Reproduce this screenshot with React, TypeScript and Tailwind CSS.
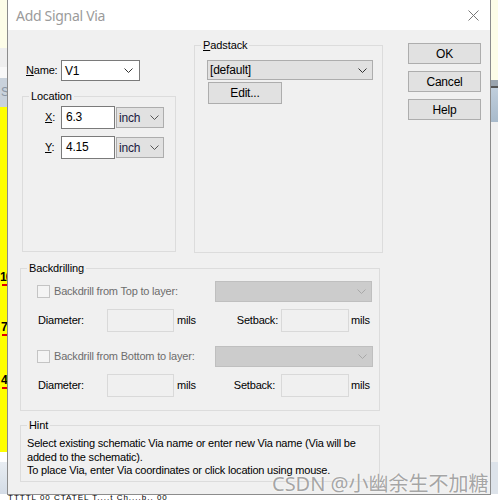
import React from "react";

function Chevron({ color = "#333" }: { color?: string }) {
  return (
    <svg width="9" height="5" viewBox="0 0 9 5">
      <polyline points="0.5,0.5 4.5,4.5 8.5,0.5" fill="none" stroke={color} strokeWidth="1" />
    </svg>
  );
}

function Legend({ children }: { children: React.ReactNode }) {
  return <legend className="ml-[6px] px-[2px] leading-[14px] text-[11px] tracking-[-0.1px]">{children}</legend>;
}

function DisabledCheck({ label }: { label: string }) {
  return (
    <div className="flex items-center">
      <div className="w-[13px] h-[13px] border border-[#c4c4c4] bg-[#f4f4f4]" />
      <span className="ml-[4px] text-[#6d6d6d]">{label}</span>
    </div>
  );
}

export default function App() {
  return (
    <div className="relative w-[498px] h-[502px] overflow-hidden bg-[#f0f0f0] font-['Liberation_Sans',Arial,sans-serif] text-[11px] tracking-[-0.2px] text-[#000]">
      {/* background desktop */}
      <div className="flex flex-col w-full h-full">
        <div className="flex flex-1">
          <div className="w-[7px] flex flex-col">
            <div className="h-[48px] bg-[#fdfde8]" />
            <div className="h-[19px] bg-[#eeeeee]" />
            <div className="h-[11px] bg-[#f8f8f8]" />
            <div className="h-[29px] bg-[#c9d2dc] text-[#8a96a4] text-[12px] leading-[29px] pl-[1px]">S</div>
            <div className="flex-1 bg-[#ffff00] flex flex-col">
              <div className="h-[163px]" />
              <div className="text-[12px] font-bold leading-[14px] tracking-[-1px] whitespace-nowrap">10</div>
              <div className="h-[2px] bg-[#e00000] ml-[2px] w-[5px]" />
              <div className="h-[34px]" />
              <div className="text-[12px] font-bold leading-[14px] pl-[1px] whitespace-nowrap">7</div>
              <div className="h-[2px] bg-[#e00000] ml-[2px] w-[5px]" />
              <div className="h-[37px]" />
              <div className="text-[12px] font-bold leading-[14px] pl-[1px] whitespace-nowrap">4</div>
              <div className="h-[2px] bg-[#e00000] ml-[2px] w-[5px]" />
            </div>
            <div className="h-[10px] bg-[#ffffff]" />
            <div className="h-[32px] bg-gradient-to-b from-[#e8edf2] to-[#d4dce6]" />
          </div>
          <div className="flex-1" />
          <div className="w-[7px] flex flex-col">
            <div className="h-[80px] bg-[#fdfde8]" />
            <div className="h-[6px] bg-[#9aa4ae]" />
            <div className="h-[2px] bg-[#555]" />
            <div className="h-[34px] bg-gradient-to-b from-[#c0cedc] to-[#a8bacb]" />
            <div className="flex-1 bg-[#f0f0f0]" />
            <div className="h-[32px] bg-[#dde3ea]" />
          </div>
        </div>
        <div className="h-[8px] bg-[#ffffff]">
          <div className="pl-[8px] text-[8px] leading-[8px] tracking-[1px]">TTTTL 00 CTATEL T....t Ch....b.. 00</div>
        </div>
      </div>

      {/* dialog window */}
      <div className="absolute left-[7px] top-0 w-[484px] h-[495px] border-x border-b border-[#8c8c8c] bg-[#f0f0f0] flex flex-col">
        <div className="h-[30px] bg-white flex items-center justify-between pl-[8px] pr-[11px]">
          <span className="font-['Noto_Sans',sans-serif] text-[14px] tracking-[-0.3px] text-[#9b9b9b]">Add Signal Via</span>
          <svg width="11" height="11" viewBox="0 0 11 11">
            <path d="M0.5 0.5 L10.5 10.5 M10.5 0.5 L0.5 10.5" stroke="#777" strokeWidth="1" />
          </svg>
        </div>

        <div className="flex items-start">
          {/* left column */}
          <div className="ml-[14px] w-[154px] flex flex-col">
            <div className="mt-[30px] h-[21px] flex items-center">
              <span className="ml-[4px] w-[35px]"><u>N</u>ame:</span>
              <div className="w-[79px] h-[21px] bg-white border border-[#7a7a7a] flex items-center justify-between pl-[3px] pr-[6px]">
                <span className="text-[12px]">V1</span>
                <Chevron />
              </div>
            </div>
            <fieldset className="mt-[8px] h-[163px] border border-[#dcdcdc]">
              <Legend>Location</Legend>
              <div className="mt-[3px] flex items-center pl-[22px]">
                <span className="w-[16px]"><u>X</u>:</span>
                <div className="w-[54px] h-[23px] bg-white border border-[#7a7a7a] pl-[4px] leading-[20px] text-[12px]">6.3</div>
                <div className="ml-[1px] w-[48px] h-[21px] bg-[#e1e1e1] border border-[#adadad] flex items-center justify-between pl-[2px] pr-[4px]">
                  <span className="text-[12px] text-[#1a1a40]">inch</span>
                  <Chevron color="#555" />
                </div>
              </div>
              <div className="mt-[7px] flex items-center pl-[22px]">
                <span className="w-[16px]"><u>Y</u>:</span>
                <div className="w-[54px] h-[23px] bg-white border border-[#7a7a7a] pl-[4px] leading-[20px] text-[12px]">4.15</div>
                <div className="ml-[1px] w-[48px] h-[21px] bg-[#e1e1e1] border border-[#adadad] flex items-center justify-between pl-[2px] pr-[4px]">
                  <span className="text-[12px] text-[#1a1a40]">inch</span>
                  <Chevron color="#555" />
                </div>
              </div>
            </fieldset>
          </div>

          {/* padstack */}
          <fieldset className="ml-[18px] mt-[8px] w-[189px] h-[215px] border border-[#dcdcdc]">
            <Legend><u>P</u>adstack</Legend>
            <div className="mt-[8px] ml-[12px] w-[166px] h-[20px] bg-[#e1e1e1] border border-[#adadad] flex items-center justify-between pl-[2px] pr-[5px]">
              <span className="text-[12px]">[default]</span>
              <Chevron />
            </div>
            <div className="mt-[2px] ml-[13px] w-[74px] h-[22px] bg-[#e1e1e1] border border-[#adadad] flex items-center justify-center text-[12px]">
              Edit...
            </div>
          </fieldset>

          {/* buttons */}
          <div className="ml-[25px] mt-[13px] flex flex-col gap-[7px]">
            <div className="w-[73px] h-[21px] bg-[#e1e1e1] border border-[#adadad] flex items-center justify-center text-[12px]">OK</div>
            <div className="w-[73px] h-[21px] bg-[#e1e1e1] border border-[#adadad] flex items-center justify-center text-[12px]">Cancel</div>
            <div className="w-[73px] h-[21px] bg-[#e1e1e1] border border-[#adadad] flex items-center justify-center text-[12px]">Help</div>
          </div>
        </div>

        {/* backdrilling */}
        <fieldset className="ml-[12px] mt-[8px] w-[360px] h-[150px] border border-[#dcdcdc]">
          <Legend>Backdrilling</Legend>
          <div className="mt-[6px] h-[21px] flex items-center">
            <div className="ml-[16px] w-[178px]">
              <DisabledCheck label="Backdrill from Top to layer:" />
            </div>
            <div className="w-[157px] h-[21px] bg-[#cccccc] border border-[#bfbfbf] flex items-center justify-end pr-[5px]">
              <Chevron color="#a8a8a8" />
            </div>
          </div>
          <div className="mt-[7px] h-[23px] flex items-center">
            <span className="ml-[17px] w-[69px]">Diameter:</span>
            <div className="w-[67px] h-[23px] border border-[#d9d9d9] bg-[#f0f0f0]" />
            <div className="ml-[3px] w-[101px] flex justify-between">
              <span>mils</span>
              <span>Setback:</span>
            </div>
            <div className="ml-[3px] w-[68px] h-[23px] border border-[#d9d9d9] bg-[#f0f0f0]" />
            <span className="ml-[2px]">mils</span>
          </div>
          <div className="mt-[14px] h-[21px] flex items-center">
            <div className="ml-[16px] w-[178px]">
              <DisabledCheck label="Backdrill from Bottom to layer:" />
            </div>
            <div className="w-[158px] h-[21px] bg-[#cccccc] border border-[#bfbfbf] flex items-center justify-end pr-[5px]">
              <Chevron color="#a8a8a8" />
            </div>
          </div>
          <div className="mt-[7px] h-[23px] flex items-center">
            <span className="ml-[17px] w-[69px]">Diameter:</span>
            <div className="w-[67px] h-[23px] border border-[#d9d9d9] bg-[#f0f0f0]" />
            <div className="ml-[3px] w-[98px] flex justify-between">
              <span>mils</span>
              <span>Setback:</span>
            </div>
            <div className="ml-[6px] w-[68px] h-[23px] border border-[#d9d9d9] bg-[#f0f0f0]" />
            <span className="ml-[2px]">mils</span>
          </div>
        </fieldset>

        {/* hint */}
        <fieldset className="ml-[12px] mt-[7px] w-[360px] h-[64px] border border-[#dcdcdc]">
          <Legend>Hint</Legend>
          <div className="mt-[5px] pl-[6px] leading-[13.5px]">
            Select existing schematic Via name or enter new Via name (Via will be
            <br />
            added to the schematic).
            <br />
            To place Via, enter Via coordinates or click location using mouse.
          </div>
        </fieldset>
      </div>

      {/* watermark */}
      <div className="absolute left-[272px] top-[471px] font-['Noto_Sans','Noto_Sans_CJK_SC',sans-serif] text-[20px] leading-[26px] tracking-[0px] text-[rgba(150,150,150,0.85)] [text-shadow:0_0_2px_rgba(255,255,255,0.9)]">
        CSDN @小幽余生不加糖
      </div>
    </div>
  );
}
